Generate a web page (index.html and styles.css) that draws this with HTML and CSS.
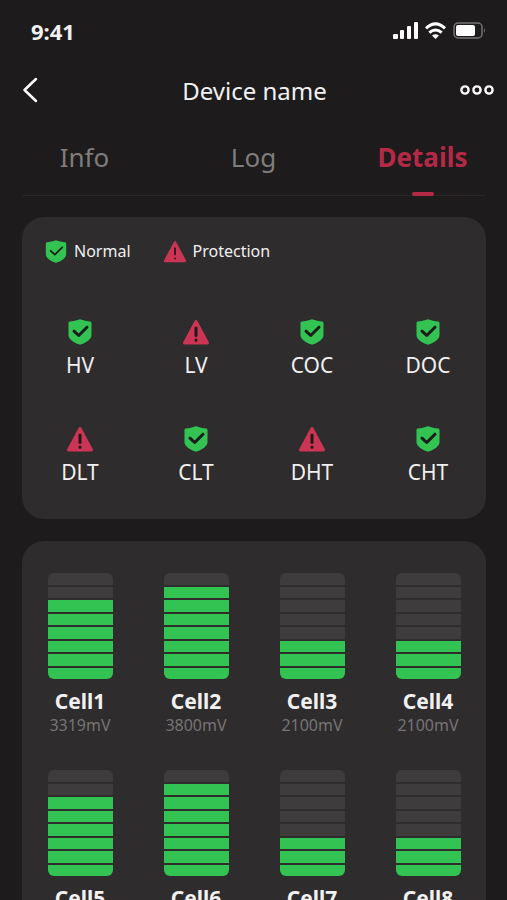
FILE: index.html
```html
<!DOCTYPE html>
<html lang="en">
	<head>
		<meta charset="utf-8">
		<meta name="viewport" content="width=device-width, initial-scale=1">
		<title>Device name</title>
		<link rel="stylesheet" href="styles.css">
	</head>
	<body>
		<!-- shared icons -->
		<svg class="sprite" aria-hidden="true">
			<symbol id="shield" viewBox="0 0 24 26">
				<path d="M12 .3C15.500 1.600 19 2.300 22.300 2.600Q23.500 2.800 23.500 4.200V16C23.500 20.500 17.500 24 12 25.800C6.500 24 .5 20.500 .5 16V4.200Q.5 2.800 1.700 2.600C5 2.300 8.500 1.600 12 .3Z" fill="#32c353"/>
				<path d="M6 12.200L10.700 16.500L19 8.200" fill="none" stroke="#1d1b1c" stroke-linecap="round" stroke-linejoin="round"/>
			</symbol>
			<symbol id="alert" viewBox="0 0 28 26">
				<path d="M14 2.500L25.500 24H2.500Z" fill="#cb3553" stroke="#cb3553" stroke-width="3" stroke-linejoin="round"/>
				<path d="M14 9V16.500M14 21V21.200" fill="none" stroke="#1d1b1c" stroke-linecap="round"/>
			</symbol>
		</svg>

		<div class="app">
			<div class="status-bar">
				<span class="time">9:41</span>
				<svg class="status-icons" width="93" height="18" viewBox="0 0 93 18" aria-hidden="true">
					<g fill="#fff">
						<rect x="0" y="12" width="5" height="5" rx="1"/>
						<rect x="7" y="8" width="4" height="9" rx="1"/>
						<rect x="14" y="4" width="4" height="13" rx="1"/>
						<rect x="21" y="0" width="4" height="17" rx="1"/>
						<path d="M42.500 17L39 13.600Q42.500 11 46 13.600Z"/>
					</g>
					<g fill="none" stroke="#fff" stroke-width="3">
						<path d="M33 6.300Q42.500 -2.500 52 6.300"/>
						<path d="M36.300 10.700Q42.500 5.300 48.700 10.700"/>
					</g>
					<rect x="61" y="1" width="28" height="15" rx="4" fill="none" stroke="#767475" stroke-width="1.500"/>
					<rect x="63" y="3" width="19" height="11" rx="2" fill="#fff"/>
					<path d="M91 6Q93 8.500 91 11Z" fill="#767475"/>
				</svg>
			</div>

			<header class="title-bar">
				<button class="icon-button" aria-label="Back">
					<svg width="16" height="26" viewBox="0 0 16 26">
						<path d="M14 2L2.500 13L14 24" fill="none" stroke="#fff" stroke-width="2.500" stroke-linecap="round" stroke-linejoin="round"/>
					</svg>
				</button>
				<h1>Device name</h1>
				<button class="icon-button more" aria-label="More">
					<svg width="34" height="10" viewBox="0 0 34 10">
						<g fill="none" stroke="#fff" stroke-width="2.400">
							<circle cx="5" cy="5" r="3.600"/>
							<circle cx="17" cy="5" r="3.600"/>
							<circle cx="29" cy="5" r="3.600"/>
						</g>
					</svg>
				</button>
			</header>

			<nav class="tabs">
				<a href="#info">Info</a>
				<a href="#log">Log</a>
				<a href="#details" class="active" aria-current="page">Details</a>
			</nav>

			<main class="content">
				<section class="card">
					<div class="legend">
						<span><svg class="icon"><use href="#shield"/></svg>Normal</span>
						<span><svg class="icon"><use href="#alert"/></svg>Protection</span>
					</div>
					<div class="grid statuses">
						<div class="status"><svg class="icon"><use href="#shield"/></svg>HV</div>
						<div class="status"><svg class="icon"><use href="#alert"/></svg>LV</div>
						<div class="status"><svg class="icon"><use href="#shield"/></svg>COC</div>
						<div class="status"><svg class="icon"><use href="#shield"/></svg>DOC</div>
						<div class="status"><svg class="icon"><use href="#alert"/></svg>DLT</div>
						<div class="status"><svg class="icon"><use href="#shield"/></svg>CLT</div>
						<div class="status"><svg class="icon"><use href="#alert"/></svg>DHT</div>
						<div class="status"><svg class="icon"><use href="#shield"/></svg>CHT</div>
					</div>
				</section>

				<section class="card">
					<div class="grid cells" id="cells"></div>
				</section>
			</main>
		</div>
		<script src="script.js"></script>
	</body>
</html>
```
FILE: styles.css
```css
* {
	box-sizing: border-box;
}

body {
	margin: 0;
	background-color: #1d1b1c;
	color: #f2f0f1;
	font-family: "Noto Sans", sans-serif;
}

.sprite {
	position: absolute;
	width: 0;
	height: 0;
}

.app {
	display: flex;
	flex-direction: column;
	height: 100vh;
	overflow: hidden;
}

.status-bar {
	display: flex;
	align-items: center;
	justify-content: space-between;
	height: 62px;
	padding: 0 21px 0 31px;
	flex: none;
}

.time {
	font-size: 22px;
	font-weight: 700;
}

.title-bar {
	display: grid;
	grid-template-columns: 1fr auto 1fr;
	align-items: center;
	height: 56px;
	padding: 0 12px 0 22px;
	flex: none;
}

/* side columns differ in padding, keep the title centred on the screen */
.title-bar h1 {
	margin: 0 8px 0 0;
	font-size: 24px;
	font-weight: 400;
}

.icon-button {
	display: flex;
	align-items: center;
	width: 35px;
	height: 40px;
	padding: 0;
	border: none;
	background: none;
	cursor: pointer;
}

.more {
	justify-self: end;
}

.tabs {
	display: grid;
	grid-template-columns: repeat(3, 1fr);
	position: relative;
	height: 78px;
	flex: none;
}

/* divider under the tabs */
.tabs::after {
	content: "";
	position: absolute;
	left: 22px;
	right: 22px;
	bottom: 0;
	height: 1px;
	background-color: #2a2829;
}

.tabs a {
	position: relative;
	color: #7f7d7e;
	font-size: 26px;
	line-height: 78px;
	text-align: center;
	text-decoration: none;
}

.tabs .active {
	color: #b42a46;
	font-weight: 700;
}

.tabs .active::after {
	content: "";
	position: absolute;
	left: 50%;
	bottom: 0;
	z-index: 1;
	width: 22px;
	height: 4px;
	margin-left: -11px;
	border-radius: 2px;
	background-color: #b42a46;
}

.content {
	flex: 1;
	min-height: 0;
	padding: 21px 21px 21px 22px;
	overflow-y: auto;
	scrollbar-width: none;
}

.card {
	margin-bottom: 22px;
	border-radius: 22px;
	background-color: #2e2c2d;
}

.legend {
	display: flex;
	gap: 32px;
	padding: 21px 22px 0;
	font-size: 16px;
	line-height: 26px;
}

.legend span {
	display: flex;
	align-items: center;
	gap: 6px;
}

.icon {
	width: 24px;
	height: 23px;
	stroke-width: 2px;
}

.grid {
	display: grid;
	grid-template-columns: repeat(4, 1fr);
}

.statuses {
	row-gap: 43px;
	padding: 55px 0 29px;
}

.status {
	display: flex;
	flex-direction: column;
	align-items: center;
	gap: 2px;
	font-size: 21px;
	line-height: 36px;
}

.status .icon {
	width: 28px;
	height: 26px;
	stroke-width: 3px;
}

.cells {
	row-gap: 35px;
	padding: 32px 0;
}

.cell {
	display: flex;
	flex-direction: column;
	align-items: center;
}

.bar {
	display: flex;
	flex-direction: column-reverse;
	gap: 2px;
	width: 65px;
	height: 106px;
	margin-bottom: 9px;
	border-radius: 6px;
	overflow: hidden;
}

.bar span {
	flex: 1;
	background-color: #3e3c3d;
}

.bar .on {
	background-color: #32c353;
}

.cell-name {
	font-size: 21px;
	font-weight: 700;
	line-height: 27px;
}

.cell-voltage {
	color: #767475;
	font-size: 16px;
	line-height: 20px;
}
```
FILE: script.js
```js
const cells = document.getElementById("cells");

// level = lit segments out of 8
const data = [
	{ voltage: 3319, level: 6 },
	{ voltage: 3800, level: 7 },
	{ voltage: 2100, level: 3 },
	{ voltage: 2100, level: 3 },
	{ voltage: 3319, level: 6 },
	{ voltage: 3800, level: 7 },
	{ voltage: 2100, level: 3 },
	{ voltage: 2100, level: 3 },
];

data.forEach(({ voltage, level }, index) => {
	const cell = document.createElement("div");
	cell.className = "cell";

	let segments = "";
	for (let i = 0; i < 8; i++) {
		segments += i < level ? '<span class="on"></span>' : "<span></span>";
	}

	cell.innerHTML = `
		<div class="bar">${segments}</div>
		<div class="cell-name">Cell${index + 1}</div>
		<div class="cell-voltage">${voltage}mV</div>
	`;
	cells.appendChild(cell);
});
```
